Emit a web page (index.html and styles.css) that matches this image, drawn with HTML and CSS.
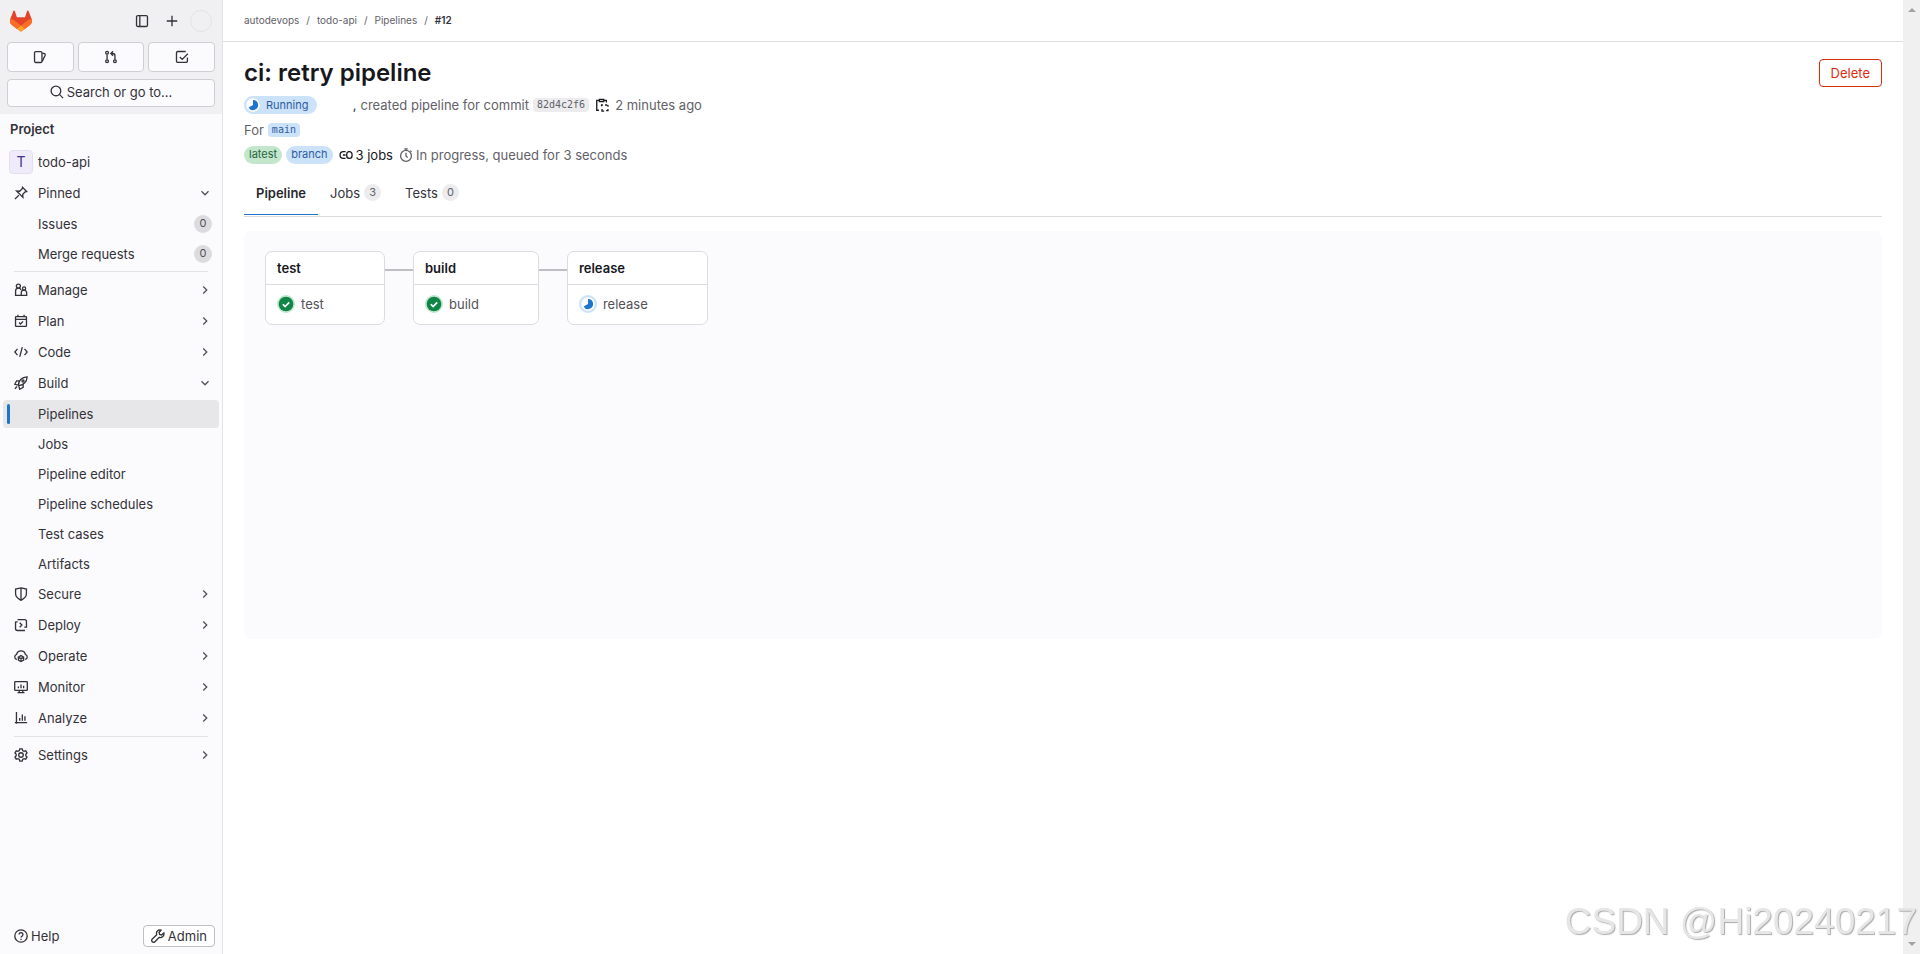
FILE: index.html
```html
<!DOCTYPE html>
<html lang="en">
<head>
    <meta charset="UTF-8">
    <meta name="viewport" content="width=device-width, initial-scale=1.0">
    <title>ci: retry pipeline (#12) · Pipelines · todo-api</title>
    <link rel="stylesheet" href="styles.css">
</head>
<body>
    <!-- Icon sprite -->
    <svg class="sprite" aria-hidden="true">
        <symbol id="i-panel" viewBox="0 0 16 16"><rect x="1.75" y="1.75" width="12.5" height="12.5" rx="1.5"/><path d="M5.5 2v12"/></symbol>
        <symbol id="i-plus" viewBox="0 0 16 16"><path d="M8 2v12M2 8h12"/></symbol>
        <symbol id="i-issues" viewBox="0 0 16 16"><rect x="1.75" y="1.75" width="8.5" height="12.5" rx="1.5"/><path d="M10.5 3.5 13 4.2a1.3 1.3 0 0 1 .9 1.7L10.5 13"/></symbol>
        <symbol id="i-merge" viewBox="0 0 16 16"><circle cx="3.5" cy="3.2" r="1.6"/><circle cx="3.5" cy="12.8" r="1.6"/><circle cx="12.5" cy="12.8" r="1.6"/><path d="M3.5 5v6M12.5 11V6.5A2.5 2.5 0 0 0 10 4H8.500M10.300 1.500 7.800 4l2.500 2.500"/></symbol>
        <symbol id="i-todo" viewBox="0 0 16 16"><path d="M14.200 8.500v4.200a1.500 1.500 0 0 1-1.500 1.500H3.200a1.500 1.500 0 0 1-1.500-1.500V3.200a1.500 1.500 0 0 1 1.500-1.500h9M5.500 8l2.700 2.700 6.500-6.500"/></symbol>
        <symbol id="i-search" viewBox="0 0 16 16"><circle cx="6.8" cy="6.8" r="5.5"/><path d="m11 11 4 4"/></symbol>
        <symbol id="i-pin" viewBox="0 0 16 16"><path d="M1 15l4.500-4.500M9.700 1.500l4.800 4.800-1.700.3-2.800 2.900.2 3.500L3 5.800l3.500.2 2.900-2.800zM3 5.800l7.200 7.200"/></symbol>
        <symbol id="i-down" viewBox="0 0 16 16"><path d="m4 6 4 4 4-4"/></symbol>
        <symbol id="i-right" viewBox="0 0 16 16"><path d="m6 4 4 4-4 4"/></symbol>
        <symbol id="i-manage" viewBox="0 0 16 16"><circle cx="5" cy="3.5" r="2.3"/><path d="M8 14.200H1.800V9a3.200 3.200 0 0 1 6.200-1"/><circle cx="11.5" cy="6.3" r="1.8"/><path d="M8.300 14.200v-3a3.100 3.100 0 0 1 6.200 0v3z"/></symbol>
        <symbol id="i-plan" viewBox="0 0 16 16"><rect x="1.75" y="3" width="12.5" height="11.2" rx=".8"/><path d="M2 6.200h12M4.500.8V3M11.500.8V3M5.800 9.800l1.600 1.600 3-3"/></symbol>
        <symbol id="i-code" viewBox="0 0 16 16"><path d="M4 4.500.9 8 4 11.500M12 4.500 15.100 8 12 11.500M9.500 2.500l-3 11"/></symbol>
        <symbol id="i-rocket" viewBox="0 0 16 16"><path d="M5 10.500c.5-5 4-9 10-9.500-.3 6-4.500 9.500-9.500 10zM6.500 5.500H3L.9 9.500l4.100 1M10.500 9.500V13l-4 2.100-1-3.600M1 14.500l2.500-2.500"/><circle cx="10.3" cy="5.7" r="1.2"/></symbol>
        <symbol id="i-shield" viewBox="0 0 16 16"><path d="M8 1 14.200 2.300v5.500c0 3.500-3 5.800-6.200 7.400-3.200-1.600-6.200-3.900-6.200-7.400V2.300zM8 1v14"/></symbol>
        <symbol id="i-deploy" viewBox="0 0 16 16"><path d="M4 1.750h8A2.250 2.250 0 0 1 14.250 4v6.500h-2.500M1.750 4v8A2.250 2.250 0 0 0 4 14.250h8.500M4.200 4.500H1.750M6.500 5.500 9 8l-2.500 2.500"/></symbol>
        <symbol id="i-operate" viewBox="0 0 16 16"><path d="M3.200 12A3 3 0 0 1 3 6.200a5.100 5.100 0 0 1 10 0A3 3 0 0 1 12.800 12M8 7.500l3 1.700v3.400l-3 1.700-3-1.700V9.200zM5 9.300l3 1.700 3-1.700M8 11v3"/></symbol>
        <symbol id="i-monitor" viewBox="0 0 16 16"><rect x=".8" y="1.8" width="14.4" height="10" rx=".8"/><path d="M4 14.500h8M6 12v2M10 12v2M5 7.500v2M8 5v4.500M11 6.500v3"/></symbol>
        <symbol id="i-analyze" viewBox="0 0 16 16"><path d="M2.800 1v13.500M1 13.200h14M6.500 8v3M9.500 4v7M12.500 6v5"/></symbol>
        <symbol id="i-gear" viewBox="0 0 16 16"><path d="M6.600 1h2.800l.5 2 1.500.8 2-.6 1.500 2.500L13.500 7.200v1.600l1.400 1.500-1.500 2.500-2-.6-1.500.8-.5 2H6.600l-.5-2-1.500-.8-2 .6-1.500-2.500 1.400-1.500V7.200L1.100 5.700l1.500-2.500 2 .6L6.100 3z"/><circle cx="8" cy="8" r="2.6"/></symbol>
        <symbol id="i-help" viewBox="0 0 16 16"><circle cx="8" cy="8" r="7.1"/><path d="M5.800 6.300a2.200 2.200 0 1 1 3.500 1.800c-.8.500-1.300.8-1.300 1.700M8 11v1.600"/></symbol>
        <symbol id="i-wrench" viewBox="0 0 16 16"><path d="M11.500 1.200a4.100 4.100 0 0 0-5 5.400L1.500 11.500a2 2 0 0 0 3 3l4.900-5a4.100 4.100 0 0 0 5.300-5l-2.700 2.300-2.200-.6-.6-2.200z"/></symbol>
        <symbol id="i-copy" viewBox="0 0 16 16"><path d="M4.500 14H2V2.800h2.500M10.500 2.800H13V5M5 1.500h5V4H5zM7.500 9.500V8H9M11.500 8H14M14.800 8v2M14.800 12.500v2h-2M10.500 15H8v-2.500"/></symbol>
        <symbol id="i-jobs" viewBox="0 0 16 16"><path d="M7.500 4.200H5a3.800 3.800 0 0 0 0 7.600h2.500M4.500 8h3M11 4.200h1a2.900 2.900 0 0 1 2.900 2.900v1.800A2.900 2.900 0 0 1 12 11.800h-.5A2.900 2.900 0 0 1 8.800 9V7A2.900 2.900 0 0 1 11 4.200z"/></symbol>
        <symbol id="i-timer" viewBox="0 0 16 16"><circle cx="8" cy="9" r="6.2"/><path d="M6 .9h4M8 1v2M8 5.500V9l2 2M13 3l1.300 1.300"/></symbol>
        <symbol id="i-running" viewBox="0 0 16 16"><circle class="run-ring" cx="8" cy="8" r="7"/><path class="run-pie" d="M8 3.500a4.500 4.500 0 1 1-3.900 6.700L8 8z"/></symbol>
        <symbol id="i-success" viewBox="0 0 16 16"><circle class="ok-ring" cx="8" cy="8" r="8"/><circle class="ok-disc" cx="8" cy="8" r="6.5"/><path class="ok-tick" d="m5.200 8.200 2 2 3.700-3.700"/></symbol>
    </svg>

    <div class="layout">
        <aside class="sidebar">
            <div class="user-bar">
                <div class="brand-row">
                    <a href="#" class="brand" aria-label="Homepage">
                        <svg viewBox="0 0 25 24">
                            <path fill="#e24329" d="m24.507 9.500-.034-.09L21.082.562a.896.896 0 0 0-1.694.091l-2.290 7.010H7.825L5.535.653a.898.898 0 0 0-1.694-.09L.451 9.411.416 9.500a6.297 6.297 0 0 0 2.090 7.278l.012.010.030.022 5.160 3.867 2.560 1.935 1.554 1.176a1.051 1.051 0 0 0 1.268 0l1.555-1.176 2.560-1.935 5.197-3.890.014-.010A6.297 6.297 0 0 0 24.507 9.500Z"/>
                            <path fill="#fc6d26" d="m24.507 9.500-.034-.09a11.440 11.440 0 0 0-4.560 2.051l-7.447 5.632 4.742 3.584 5.197-3.890.014-.010A6.297 6.297 0 0 0 24.507 9.500Z"/>
                            <path fill="#fca326" d="m7.707 20.677 2.560 1.935 1.555 1.176a1.051 1.051 0 0 0 1.268 0l1.555-1.176 2.560-1.935-4.743-3.584-4.755 3.584Z"/>
                            <path fill="#fc6d26" d="M5.010 11.461a11.430 11.430 0 0 0-4.560-2.050L.416 9.500a6.297 6.297 0 0 0 2.090 7.278l.012.010.030.022 5.160 3.867 4.745-3.584-7.444-5.632Z"/>
                        </svg>
                    </a>
                    <button type="button" class="icon-button" aria-label="Hide sidebar"><svg class="icon"><use href="#i-panel"/></svg></button>
                    <button type="button" class="icon-button" aria-label="Create new"><svg class="icon"><use href="#i-plus"/></svg></button>
                    <button type="button" class="user-avatar" aria-label="User menu"></button>
                </div>
                <div class="counter-row">
                    <a href="#" class="counter" aria-label="Issues"><svg class="icon"><use href="#i-issues"/></svg></a>
                    <a href="#" class="counter" aria-label="Merge requests"><svg class="icon"><use href="#i-merge"/></svg></a>
                    <a href="#" class="counter" aria-label="To-Do list"><svg class="icon"><use href="#i-todo"/></svg></a>
                </div>
                <button type="button" class="search-button"><svg class="icon"><use href="#i-search"/></svg>Search or go to…</button>
            </div>

            <nav class="nav" aria-label="Project">
                <h2 class="nav-heading">Project</h2>
                <a href="#" class="nav-item project"><span class="project-avatar">T</span>todo-api</a>
                <a href="#" class="nav-item"><svg class="icon"><use href="#i-pin"/></svg>Pinned<svg class="chevron"><use href="#i-down"/></svg></a>
                <div class="subnav">
                    <a href="#" class="subnav-item">Issues<span class="count">0</span></a>
                    <a href="#" class="subnav-item">Merge requests<span class="count">0</span></a>
                </div>
                <hr class="nav-divider">
                <a href="#" class="nav-item"><svg class="icon"><use href="#i-manage"/></svg>Manage<svg class="chevron"><use href="#i-right"/></svg></a>
                <a href="#" class="nav-item"><svg class="icon"><use href="#i-plan"/></svg>Plan<svg class="chevron"><use href="#i-right"/></svg></a>
                <a href="#" class="nav-item"><svg class="icon"><use href="#i-code"/></svg>Code<svg class="chevron"><use href="#i-right"/></svg></a>
                <a href="#" class="nav-item"><svg class="icon"><use href="#i-rocket"/></svg>Build<svg class="chevron"><use href="#i-down"/></svg></a>
                <div class="subnav">
                    <a href="#" class="subnav-item active">Pipelines</a>
                    <a href="#" class="subnav-item">Jobs</a>
                    <a href="#" class="subnav-item">Pipeline editor</a>
                    <a href="#" class="subnav-item">Pipeline schedules</a>
                    <a href="#" class="subnav-item">Test cases</a>
                    <a href="#" class="subnav-item">Artifacts</a>
                </div>
                <a href="#" class="nav-item"><svg class="icon"><use href="#i-shield"/></svg>Secure<svg class="chevron"><use href="#i-right"/></svg></a>
                <a href="#" class="nav-item"><svg class="icon"><use href="#i-deploy"/></svg>Deploy<svg class="chevron"><use href="#i-right"/></svg></a>
                <a href="#" class="nav-item"><svg class="icon"><use href="#i-operate"/></svg>Operate<svg class="chevron"><use href="#i-right"/></svg></a>
                <a href="#" class="nav-item"><svg class="icon"><use href="#i-monitor"/></svg>Monitor<svg class="chevron"><use href="#i-right"/></svg></a>
                <a href="#" class="nav-item"><svg class="icon"><use href="#i-analyze"/></svg>Analyze<svg class="chevron"><use href="#i-right"/></svg></a>
                <hr class="nav-divider">
                <a href="#" class="nav-item"><svg class="icon"><use href="#i-gear"/></svg>Settings<svg class="chevron"><use href="#i-right"/></svg></a>
            </nav>

            <div class="sidebar-footer">
                <button type="button" class="help-button"><svg class="icon"><use href="#i-help"/></svg>Help</button>
                <a href="#" class="admin-button"><svg class="icon"><use href="#i-wrench"/></svg>Admin</a>
            </div>
        </aside>

        <div class="page">
            <nav class="breadcrumbs" aria-label="Breadcrumbs">
                <a href="#">autodevops</a><span>/</span>
                <a href="#">todo-api</a><span>/</span>
                <a href="#">Pipelines</a><span>/</span>
                <a href="#" class="current">#12</a>
            </nav>

            <main class="content">
                <header class="page-header">
                    <h1 class="page-title">ci: retry pipeline</h1>
                    <button type="button" class="delete-button">Delete</button>
                </header>

                <div class="meta-row">
                    <a href="#" class="status-badge"><svg class="status-icon"><use href="#i-running"/></svg>Running</a>
                    <span class="author">,</span>
                    <span>created pipeline for commit</span>
                    <a href="#" class="commit-sha">82d4c2f6</a>
                    <button type="button" class="copy-button" aria-label="Copy commit SHA"><svg class="icon"><use href="#i-copy"/></svg></button>
                    <time>2 minutes ago</time>
                </div>
                <div class="meta-row">
                    <span>For</span>
                    <a href="#" class="ref-name">main</a>
                </div>
                <div class="meta-row">
                    <span class="badge badge-success">latest</span>
                    <span class="badge badge-info">branch</span>
                    <span class="job-total"><svg class="icon"><use href="#i-jobs"/></svg>3 jobs</span>
                    <span class="timing"><svg class="icon"><use href="#i-timer"/></svg>In progress, queued for 3 seconds</span>
                </div>

                <div class="tabs" role="tablist">
                    <a href="#" class="tab active" role="tab" aria-selected="true">Pipeline</a>
                    <a href="#" class="tab" role="tab">Jobs<span class="tab-count">3</span></a>
                    <a href="#" class="tab" role="tab">Tests<span class="tab-count">0</span></a>
                </div>

                <div class="graph">
                    <section class="stage">
                        <h3 class="stage-name">test</h3>
                        <a href="#" class="job"><svg class="status-icon"><use href="#i-success"/></svg>test</a>
                    </section>
                    <div class="link"></div>
                    <section class="stage">
                        <h3 class="stage-name">build</h3>
                        <a href="#" class="job"><svg class="status-icon"><use href="#i-success"/></svg>build</a>
                    </section>
                    <div class="link"></div>
                    <section class="stage">
                        <h3 class="stage-name">release</h3>
                        <a href="#" class="job"><svg class="status-icon"><use href="#i-running"/></svg>release</a>
                    </section>
                </div>
            </main>
        </div>

        <div class="scroll-track" aria-hidden="true">
            <span class="arrow arrow-up"></span>
            <span class="arrow arrow-down"></span>
        </div>
    </div>

    <div class="watermark">CSDN @Hi20240217</div>
</body>
</html>
```

FILE: styles.css
```css
* {
    margin: 0;
    padding: 0;
    box-sizing: border-box;
}

body {
    font-family: Inter, "Noto Sans", sans-serif;
    font-size: 13px;
    line-height: 20px;
    color: #333238;
    background-color: #fff;
}

a {
    color: inherit;
    text-decoration: none;
}

button {
    font: inherit;
    color: inherit;
    background: none;
    border: none;
    cursor: pointer;
}

.sprite {
    display: none;
}

.icon,
.chevron {
    width: 14px;
    height: 14px;
    flex-shrink: 0;
    fill: none;
    stroke: currentColor;
    stroke-width: 1.5;
}

.layout {
    display: flex;
    min-height: 100vh;
}

/* Sidebar */
.sidebar {
    width: 223px;
    flex-shrink: 0;
    display: flex;
    flex-direction: column;
    background-color: #fbfafd;
    border-right: 1px solid #e3e3e6;
}

.user-bar {
    background-color: #f0f0f2;
    padding: 8px 7px 7px;
}

.brand-row {
    display: flex;
    align-items: center;
    height: 26px;
    padding: 0 3px;
    margin-bottom: 8px;
}

.brand {
    margin-right: auto;
}

.brand svg {
    display: block;
    width: 22px;
    height: 22px;
}

.icon-button {
    display: flex;
    justify-content: center;
    width: 30px;
}

.user-avatar {
    width: 22px;
    height: 22px;
    margin-left: 3px;
    border: 1px solid #e3e3e6;
    border-radius: 50%;
}

.counter-row {
    display: flex;
    gap: 4px;
    margin-bottom: 7px;
}

.counter,
.search-button {
    display: flex;
    align-items: center;
    justify-content: center;
    background-color: #fbfafd;
    border: 1px solid #cfcfd3;
    border-radius: 4px;
}

.counter {
    flex: 1;
    height: 30px;
}

.search-button {
    width: 100%;
    height: 28px;
    gap: 3px;
    padding-bottom: 2px;
}

.nav {
    flex: 1;
}

.nav-heading {
    font-size: 13px;
    font-weight: 600;
    line-height: 20px;
    padding: 5px 10px 8px;
}

.nav-item {
    display: flex;
    align-items: center;
    height: 31px;
    padding: 0 10px 0 14px;
    gap: 10px;
}

.nav-item.project {
    height: 30px;
}

.project-avatar {
    width: 24px;
    height: 24px;
    margin: 0 -5px;
    border: 1px solid #e3e0ee;
    border-radius: 4px;
    background-color: #f0ebfa;
    color: #41338f;
    font-size: 14px;
    line-height: 22px;
    text-align: center;
}

.chevron {
    margin-left: auto;
    color: #535158;
}

.subnav {
    display: flex;
    flex-direction: column;
    gap: 2px;
    padding-top: 2px;
}

.subnav-item {
    display: flex;
    align-items: center;
    justify-content: space-between;
    height: 28px;
    margin: 0 3px;
    padding: 0 7px 0 35px;
    border-radius: 4px;
}

.subnav-item.active {
    position: relative;
    background-color: #e7e7e9;
}

.subnav-item.active::before {
    content: "";
    position: absolute;
    left: 4px;
    top: 4px;
    bottom: 4px;
    width: 3px;
    border-radius: 3px;
    background-color: #1f75cb;
}

.count {
    width: 18px;
    height: 18px;
    border-radius: 9px;
    background-color: #dcdcde;
    color: #535158;
    font-size: 11px;
    line-height: 17px;
    text-align: center;
}

.nav-divider {
    margin: 3px 14px 2px;
    border: none;
    border-top: 1px solid #e3e3e6;
}

.sidebar-footer {
    display: flex;
    align-items: center;
    justify-content: space-between;
    padding: 7px;
}

.help-button,
.admin-button {
    display: flex;
    align-items: center;
    height: 22px;
    gap: 3px;
    padding: 0 7px;
}

.admin-button {
    background-color: #fff;
    border: 1px solid #bfbfc3;
    border-radius: 4px;
}

/* Page */
.page {
    flex: 1;
    min-width: 0;
}

.breadcrumbs {
    display: flex;
    align-items: center;
    gap: 7px;
    height: 42px;
    padding: 0 21px 1px;
    border-bottom: 1px solid #dcdcde;
    color: #626168;
    font-size: 10px;
}

.breadcrumbs .current {
    color: #333238;
    font-weight: 600;
}

.content {
    padding: 17px 21px 0;
}

.page-header {
    display: flex;
    align-items: center;
    justify-content: space-between;
    margin-bottom: 5px;
}

.page-title {
    color: #18171d;
    font-size: 24px;
    font-weight: 600;
    line-height: 28px;
}

.delete-button {
    height: 28px;
    padding: 0 11px;
    border: 1px solid #dd2b0e;
    border-radius: 4px;
    background-color: #fff;
    color: #dd2b0e;
}

.meta-row {
    display: flex;
    align-items: center;
    height: 25px;
    gap: 4px;
    color: #626168;
}

.status-icon {
    width: 18px;
    height: 18px;
    flex-shrink: 0;
}

.status-badge {
    display: flex;
    align-items: center;
    gap: 4px;
    height: 18px;
    padding-right: 8px;
    border-radius: 9px;
    background-color: #cbe2f9;
    color: #2f5ca0;
    font-size: 11px;
}

.run-ring {
    fill: #fff;
    stroke: #cbe2f9;
    stroke-width: 2;
}

.run-pie {
    fill: #1f75cb;
}

.ok-ring {
    fill: #c3e6cd;
}

.ok-disc {
    fill: #108548;
}

.ok-tick {
    fill: none;
    stroke: #fff;
    stroke-width: 1.5;
}

.author {
    width: 36px;
    color: #333238;
    text-align: right;
}

.commit-sha,
.ref-name {
    padding: 0 4px;
    border-radius: 4px;
    font-family: "DejaVu Sans Mono", monospace;
    font-size: 10px;
    line-height: 14px;
}

.commit-sha {
    background-color: #ececef;
}

.ref-name {
    background-color: #cbe2f9;
    color: #2f5ca0;
}

.copy-button {
    display: flex;
    padding: 0 2px;
    color: #18171d;
}

.badge {
    height: 18px;
    padding: 0 5px;
    border-radius: 9px;
    font-size: 11px;
    line-height: 17px;
}

.badge-success {
    background-color: #c3e6cd;
    color: #24663b;
}

.badge-info {
    background-color: #cbe2f9;
    color: #2f5ca0;
}

.job-total,
.timing {
    display: flex;
    align-items: center;
    gap: 3px;
}

.job-total {
    margin: 0 2px;
    color: #18171d;
}

.tabs {
    display: flex;
    height: 50px;
    border-bottom: 1px solid #dcdcde;
    margin-bottom: 14px;
}

.tab {
    display: flex;
    align-items: center;
    gap: 4px;
    margin-bottom: 1px;
    padding: 4px 12px 0;
    border-bottom: 1px solid transparent;
}

.tab.active {
    color: #28272d;
    font-weight: 600;
    border-bottom-color: #1f75cb;
}

.tab-count {
    width: 17px;
    height: 17px;
    border-radius: 9px;
    background-color: #ececef;
    color: #626168;
    font-size: 11px;
    font-weight: 400;
    line-height: 17px;
    text-align: center;
}

/* Pipeline graph */
.graph {
    display: flex;
    align-items: flex-start;
    min-height: 408px;
    padding: 20px 21px;
    border-radius: 7px;
    background-color: #fbfafd;
}

.stage {
    min-width: 120px;
    border: 1px solid #dcdcde;
    border-radius: 7px;
    background-color: #fff;
}

.stage-name {
    padding: 6px 11px;
    border-bottom: 1px solid #dcdcde;
    color: #18171d;
    font-size: 13px;
    font-weight: 600;
    line-height: 20px;
}

.job {
    display: flex;
    align-items: center;
    gap: 6px;
    height: 39px;
    padding: 0 59px 2px 11px;
    color: #535158;
}

.link {
    width: 28px;
    height: 2px;
    margin-top: 18px;
    background-color: #bfbfc3;
}

/* Scroll track at the right edge */
.scroll-track {
    display: flex;
    flex-direction: column;
    align-items: center;
    justify-content: space-between;
    width: 17px;
    margin-right: 1px;
    padding: 8px 0;
    background-color: #f0f0f0;
}

.arrow {
    border-left: 4px solid transparent;
    border-right: 4px solid transparent;
}

.arrow-up {
    border-bottom: 4px solid #a3a3a3;
}

.arrow-down {
    border-top: 4px solid #a3a3a3;
}

.watermark {
    position: fixed;
    right: 4px;
    bottom: 12px;
    color: #e6e6e6;
    font-family: "Liberation Sans", sans-serif;
    font-size: 37px;
    line-height: 40px;
    text-shadow: 1px 1px 1px #aaa;
}
```
